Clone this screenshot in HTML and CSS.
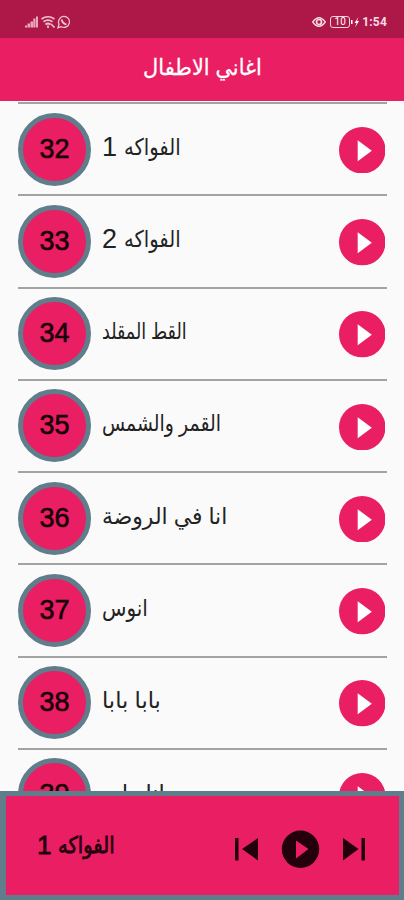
FILE: index.html
```
<!DOCTYPE html>
<html lang="ar">
<head>
<meta charset="utf-8">
<title>اغاني الاطفال</title>
<link rel="stylesheet" href="styles.css">
</head>
<body>
<svg width="0" height="0" class="defs"><defs>
<symbol id="play" viewBox="0 0 46 46"><circle cx="23" cy="23" r="23" fill="#e91e63"/><path d="M18.500 13V34L32.500 23.500Z" fill="#fff"/></symbol>
</defs></svg>
<div class="screen">
<header class="status">
<svg class="left-icons" viewBox="0 0 46 14" width="46" height="14">
<path d="M0 12.500v-2h2v2zM2.500 12.500V8.500h2.500v4zM5.500 12.500v-6H8v6zM8.300 12.500V3.500h2.200v9zM11 12.500V1.500h2v11z" fill="#e8a9bf"/>
<g fill="none" stroke="#f0bfcf" stroke-width="1.700"><path d="M16.500 4Q23-.5 29.500 4M18.500 6.800Q23 3.500 27.500 6.800M20.500 9.500Q23 7.500 25.500 9.500"/><path d="M23 10.500v2.500M26 9l3.500 3.500" /></g>
<g fill="none" stroke="#f0c5d3" stroke-width="1.300"><path d="M33 12.700l1-3.500a5.500 5.500 0 1 1 2.300 2.500z"/><path d="M36.500 4.500q1 4 5 5" stroke-width="1.800"/></g>
</svg>
<div class="right-icons">
<svg viewBox="0 0 14 12" width="14" height="12"><path d="M.7 6Q7-2.500 13.300 6Q7 14.500.7 6Z" fill="none" stroke="#f8dce5" stroke-width="1.300"/><circle cx="7" cy="6" r="2.500" fill="none" stroke="#f8dce5" stroke-width="1.700"/></svg>
<span class="battery">10</span>
<svg class="bolt" viewBox="0 0 8 12" width="8" height="12"><path d="M0 4h1.500v4H0zM7.500 1L3.500 7h2L4 11.500L8 5H6z" fill="#fff"/></svg>
<span class="clock">1:54</span>
</div>
</header>
<div class="appbar"><h1 dir="rtl">اغاني الاطفال</h1></div>
<main class="list">
<div class="row"><div class="num">32</div><span class="title" dir="rtl"><span class="ar fawakih">الفواكه</span> <span class="digit">1</span></span><svg class="play"><use href="#play"/></svg></div>
<div class="row"><div class="num">33</div><span class="title" dir="rtl"><span class="ar fawakih">الفواكه</span> <span class="digit">2</span></span><svg class="play"><use href="#play"/></svg></div>
<div class="row"><div class="num">34</div><span class="title" dir="rtl"><span class="ar cat">القط المقلد</span></span><svg class="play"><use href="#play"/></svg></div>
<div class="row"><div class="num">35</div><span class="title" dir="rtl"><span class="ar moon">القمر والشمس</span></span><svg class="play"><use href="#play"/></svg></div>
<div class="row"><div class="num">36</div><span class="title" dir="rtl"><span class="ar garden">انا في الروضة</span></span><svg class="play"><use href="#play"/></svg></div>
<div class="row"><div class="num">37</div><span class="title" dir="rtl"><span class="ar anous">انوس</span></span><svg class="play"><use href="#play"/></svg></div>
<div class="row"><div class="num">38</div><span class="title" dir="rtl"><span class="ar baba">بابا بابا</span></span><svg class="play"><use href="#play"/></svg></div>
<div class="row"><div class="num">39</div><span class="title" dir="rtl"><span class="ar last">انا طير</span></span><svg class="play"><use href="#play"/></svg></div>
</main>
<footer class="player">
<span class="now" dir="rtl"><span class="ar fawakih">الفواكه</span> <span class="digit">1</span></span>
<svg class="controls" viewBox="0 0 132 38" width="132" height="38" fill="#24000d">
<path d="M0 8h3.500v22.500H0zM23 8v22.500L7 19z"/>
<path fill-rule="evenodd" d="M65.500.5a18.700 18.700 0 1 1 0 37.400a18.700 18.700 0 0 1 0-37.400zM61 10.500v18L73.500 19z"/>
<path d="M108 8v22.500L123.500 19zM126.500 8h3.500v22.500h-3.500z"/>
</svg>
</footer>
</div>
</body>
</html>
```
FILE: styles.css
```
* { box-sizing: border-box; }
body { margin: 0; background: #fafafa; font-family: "Liberation Sans", "DejaVu Sans", sans-serif; }
.defs { display: block; }
.screen { width: 404px; height: 900px; display: flex; flex-direction: column; overflow: hidden; }
.status { height: 38px; flex: none; background: #ad1848; display: flex; justify-content: space-between; align-items: flex-start; padding: 15px 17px 0 25px; color: #fff; }
.right-icons { display: flex; align-items: center; height: 14px; }
.battery { width: 20px; height: 12px; margin-left: 4px; border: 1.500px solid #f5d3de; border-radius: 3px; font: 10px/10px Roboto, sans-serif; text-align: center; }
.bolt { margin: 0 3px 0 1px; }
.clock { font: 700 12px/14px Roboto, sans-serif; letter-spacing: .2px; color: #f8dce5; }
.appbar { height: 63px; flex: none; background: #e91e63; display: flex; justify-content: center; align-items: center; padding-bottom: 4px; }
h1 { margin: 0; color: #fff; font-size: 22px; font-weight: 400; line-height: 30px; transform: scaleX(.95); -webkit-text-stroke: .3px #fff; }
.list { flex: 1; min-height: 0; overflow: hidden; padding: 1px 17px 0 18px; }
.row { height: 92.250px; border-top: 2px solid #a3a3a3; display: flex; align-items: center; }
.num { width: 73px; height: 73px; flex: none; border: 5px solid #607d8b; border-radius: 50%; background: #e91e63; display: flex; align-items: center; justify-content: center; font-size: 27px; color: #170008; -webkit-text-stroke: .6px #170008; }
.title, .now { display: flex; align-items: baseline; white-space: nowrap; line-height: 32px; }
.title { margin-left: 11px; font-size: 23px; color: #222; padding-bottom: 2px; }
.digit { font-size: 27px; margin-right: 7px; }
.ar { display: block; transform-origin: left; }
.title .ar { margin-bottom: 1px; }
.fawakih { transform: translateY(-1px) scaleX(.85); }
.cat { transform: translateY(-1px) scaleX(.76); }
.moon { transform: translateY(-1px) scaleX(.82); }
.garden { transform: translateY(-1px) scaleX(.95); }
.anous { transform: translateY(-1px) scaleX(.87); }
.baba { transform: translateY(-1px) scaleX(.98); }
.last { transform: scaleX(.98); }
.play { width: 46.500px; height: 46.500px; margin-left: auto; margin-right: 2px; margin-top: 2px; }
.player { height: 109px; flex: none; border: 5px solid #607d8b; border-left-width: 6px; background: #e91e63; display: flex; justify-content: space-between; align-items: center; padding: 0 32px 0 31px; }
.now { font-size: 23px; color: #24000d; -webkit-text-stroke: .8px #24000d; }
.now .digit { font-size: 26px; }
.controls { margin-top: 7px; }
```
